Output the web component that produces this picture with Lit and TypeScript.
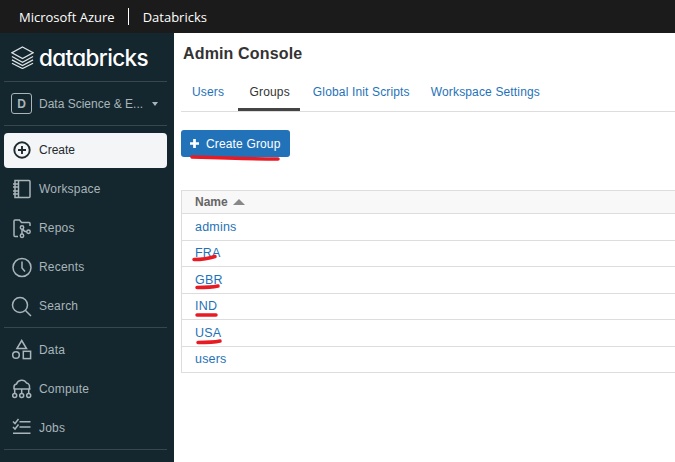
import { LitElement, html, css, svg } from 'lit';
import { customElement } from 'lit/decorators.js';

const icons: Record<string, unknown> = {
  workspace: svg`<path d="M3 1.500h14a1 1 0 0 1 1 1v15a1 1 0 0 1-1 1H3z"/><path d="M6.500 1.500v17M1 5h5M1 8h5M1 12h5M1 15h5"/>`,
  repos: svg`<path d="M6 18.500H3a1 1 0 0 1-1-1V3a1 1 0 0 1 1-1h4.500l2 2.500h7.500a1 1 0 0 1 1 1V8"/><circle cx="10" cy="9.500" r="1.700"/><circle cx="10" cy="17.700" r="1.700"/><circle cx="16.500" cy="13.700" r="1.700"/><path d="M10 11.200v4.800M11 11c.6 2 2 2.700 3.800 2.700"/>`,
  recents: svg`<circle cx="10" cy="10.500" r="9"/><path d="M10 4.500v6.500l3 3.500"/>`,
  search: svg`<circle cx="8" cy="9" r="7.500"/><path d="M13.500 14.500l5.500 5.500"/>`,
  data: svg`<path d="M9.700.500l4.800 8H4.900z"/><circle cx="4" cy="15" r="3.300"/><rect x="11.300" y="11.300" width="7.300" height="7.300"/>`,
  compute: svg`<path d="M2 10V8a3 3 0 0 1 2.500-3 5.500 5.500 0 0 1 10-1 3.500 3.500 0 0 1 3 4v2M1.500 10h17M9.700 10v4.500M2.700 10v4.500M16.700 10v4.500"/><circle cx="2.700" cy="16.500" r="2"/><circle cx="9.700" cy="16.500" r="2"/><circle cx="16.700" cy="16.500" r="2"/>`,
  jobs: svg`<path d="M1 3.500l2 2 3.500-4.500M1 9l2 2 3.500-4.500M7.500 3.700h11M7.500 9h11M1 15.300h17.500"/>`,
};

const upperNav = [
  { label: 'Workspace', icon: 'workspace' },
  { label: 'Repos', icon: 'repos' },
  { label: 'Recents', icon: 'recents' },
  { label: 'Search', icon: 'search' },
];

const lowerNav = [
  { label: 'Data', icon: 'data' },
  { label: 'Compute', icon: 'compute' },
  { label: 'Jobs', icon: 'jobs' },
];

const groups = ['admins', 'FRA', 'GBR', 'IND', 'USA', 'users'];

@customElement('app-root')
export class AppRoot extends LitElement {
  static styles = css`
    :host {
      display: block;
      width: 675px;
      height: 462px;
      overflow: hidden;
      position: relative;
      font-family: 'Liberation Sans', Arial, sans-serif;
      background: #fff;
    }

    .topbar {
      height: 33px;
      background: #1b1b1b;
      color: #fff;
      display: flex;
      align-items: center;
      padding-left: 19px;
      font-family: 'Open Sans', sans-serif;
      font-size: 13px;
    }

    .topbar .sep {
      width: 1px;
      height: 17px;
      background: #fff;
      margin: 0 14px 0 13px;
    }

    .body {
      display: flex;
      height: 429px;
    }

    .sidebar {
      width: 174px;
      flex: none;
      background: #14272f;
      color: #a9b5b9;
      font-size: 12px;
      padding: 0 7px 0 4px;
      box-sizing: border-box;
    }

    .logo {
      height: 48px;
      display: flex;
      align-items: center;
      gap: 5px;
      padding-left: 7px;
      color: #fff;
      font-family: 'Inter', sans-serif;
      font-size: 22.5px;
      font-weight: 500;
      font-feature-settings: 'cv11';
      letter-spacing: -0.65px;
      border-bottom: 1px solid #38474e;
    }

    .logo svg {
      width: 23px;
      height: 23px;
      fill: none;
      stroke: #dfe3e5;
      stroke-width: 1.3;
    }

    .workspace {
      height: 43px;
      display: flex;
      align-items: center;
      padding-left: 7px;
      border-bottom: 1px solid #38474e;
    }

    .badge {
      width: 21px;
      height: 21px;
      box-sizing: border-box;
      border: 1px solid #a9b5b9;
      border-radius: 3px;
      display: flex;
      align-items: center;
      justify-content: center;
      font-weight: 700;
      font-size: 12px;
      margin-right: 7px;
    }

    .caret {
      width: 0;
      height: 0;
      border: 3.5px solid transparent;
      border-top: 4px solid #a9b5b9;
      border-bottom: 0;
      margin-left: 9px;
    }

    .create {
      margin-top: 7px;
      height: 35px;
      background: #f3f5f6;
      border-radius: 4px;
      color: #1f2a30;
      display: flex;
      align-items: center;
      padding: 0 0 1px 8px;
      box-sizing: border-box;
      gap: 7px;
    }

    .create svg {
      width: 20px;
      height: 20px;
      fill: none;
      stroke: #1f2a30;
      stroke-width: 1.9;
    }

    .nav {
      padding: 1px 0 2px;
    }

    .nav.lower {
      padding: 2px 0;
      border-top: 1px solid #38474e;
      border-bottom: 1px solid #38474e;
    }

    .item {
      height: 39px;
      display: flex;
      align-items: center;
      padding-left: 8px;
      gap: 7px;
      letter-spacing: 0.2px;
    }

    .item svg {
      width: 20px;
      height: 20px;
      fill: none;
      stroke: #a9b5b9;
      stroke-width: 1.5;
      overflow: visible;
    }

    .main {
      flex: 1;
      min-width: 0;
      padding-left: 7px;
    }

    h1 {
      margin: 0;
      padding: 11px 0 0 2px;
      height: 29px;
      font-size: 16px;
      line-height: 20px;
      font-weight: 700;
      letter-spacing: 0.15px;
      color: #333;
    }

    .tabs {
      display: flex;
      height: 38px;
      border-bottom: 1px solid #ddd;
      font-size: 12px;
      letter-spacing: 0.15px;
    }

    .tab {
      color: #1f72b8;
      padding: 0 9px 0 12px;
      display: flex;
      align-items: center;
      box-sizing: border-box;
    }

    .tab:first-child {
      padding: 0 13.5px 0 11px;
    }

    .tab.active {
      color: #333;
      border-bottom: 3px solid #444;
      padding: 3px 10px 0 12px;
      margin-right: 1px;
    }

    .button {
      margin-top: 18px;
      width: 109px;
      height: 27px;
      background: #2272ba;
      border-radius: 3px;
      color: #fff;
      font-size: 12px;
      letter-spacing: 0.15px;
      display: flex;
      align-items: center;
      padding-left: 9px;
      gap: 7px;
      box-sizing: border-box;
    }

    .button svg {
      width: 9px;
      height: 9px;
      fill: #fff;
    }

    .table {
      margin-top: 33px;
      font-size: 12.5px;
      border-left: 1px solid #ddd;
    }

    .head {
      height: 24px;
      box-sizing: border-box;
      background: #f8f8f8;
      border-top: 1px solid #ddd;
      border-bottom: 1px solid #ddd;
      color: #666;
      display: flex;
      align-items: center;
      gap: 5px;
      padding-left: 13px;
      font-size: 12px;
      font-weight: 700;
    }

    .arrow {
      width: 0;
      height: 0;
      border: 6px solid transparent;
      border-bottom: 6px solid #888;
      border-top: 0;
    }

    .row {
      height: 26.5px;
      box-sizing: border-box;
      display: flex;
      align-items: center;
      padding-left: 13px;
      color: #1f72b8;
      border-bottom: 1px solid #ddd;
      letter-spacing: 0.2px;
    }

    .marks {
      position: absolute;
      left: 0;
      top: 0;
      width: 675px;
      height: 462px;
      pointer-events: none;
      fill: none;
      stroke: #e81a24;
      stroke-width: 3.5;
      stroke-linecap: round;
    }
  `;

  navItem(item: { label: string; icon: string }) {
    return html`
      <div class="item">
        <svg viewBox="0 0 20 20">${icons[item.icon]}</svg>
        <span>${item.label}</span>
      </div>
    `;
  }

  render() {
    return html`
      <div class="topbar">
        <span>Microsoft Azure</span>
        <span class="sep"></span>
        <span>Databricks</span>
      </div>
      <div class="body">
        <div class="sidebar">
          <div class="logo">
            <svg viewBox="0 0 24 24">
              <path d="M12 1l11 6-11 6L1 7z"/>
              <path d="M1 11l11 6 11-6M1 14.500l11 6 11-6M1 18l11 5.500L23 18"/>
            </svg>
            <span>databricks</span>
          </div>
          <div class="workspace">
            <div class="badge">D</div>
            <span>Data Science &amp; E...</span>
            <span class="caret"></span>
          </div>
          <div class="create">
            <svg viewBox="0 0 20 20">
              <circle cx="10" cy="10" r="7.700"/>
              <path d="M10 6v8M6 10h8"/>
            </svg>
            <span>Create</span>
          </div>
          <div class="nav">${upperNav.map((item) => this.navItem(item))}</div>
          <div class="nav lower">${lowerNav.map((item) => this.navItem(item))}</div>
        </div>
        <div class="main">
          <h1>Admin Console</h1>
          <div class="tabs">
            <div class="tab">Users</div>
            <div class="tab active">Groups</div>
            <div class="tab">Global Init Scripts</div>
            <div class="tab">Workspace Settings</div>
          </div>
          <div class="button">
            <svg viewBox="0 0 10 10"><path d="M3.500 0h3v3.500H10v3H6.500V10h-3V6.500H0v-3h3.500z"/></svg>
            <span>Create Group</span>
          </div>
          <div class="table">
            <div class="head">
              <span>Name</span>
              <span class="arrow"></span>
            </div>
            ${groups.map((group) => html`<div class="row">${group}</div>`)}
          </div>
        </div>
      </div>
      <svg class="marks" viewBox="0 0 675 462">
        <path d="M192 157c30 1 60 2 86 2"/>
        <path d="M194 259.500c8 0 15-1 21-3"/>
        <path d="M197 287.500c8 0 14 0 21-1.500"/>
        <path d="M197 315h19"/>
        <path d="M198 342.500c8 0 15 0 22-1.500"/>
      </svg>
    `;
  }
}
